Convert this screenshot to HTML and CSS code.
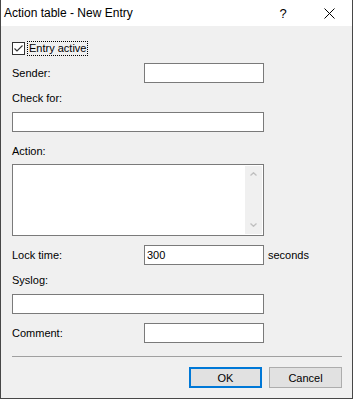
FILE: index.html
```html
<!DOCTYPE html>
<html lang="en">
<head>
  <meta charset="UTF-8">
  <title>Action table - New Entry</title>
  <link rel="stylesheet" href="styles.css">
</head>
<body>
  <div class="window">
    <!-- Title bar -->
    <div class="titlebar">
      <div class="title">Action table - New Entry</div>
      <div class="caption-btn help">?</div>
      <div class="caption-btn close">
        <svg width="11" height="11" viewBox="0 0 11 11"><path d="M0.5 0.5L10.5 10.5M10.5 0.5L0.5 10.5" stroke="#000" stroke-width="1" fill="none"/></svg>
      </div>
    </div>

    <div class="content">
      <!-- Entry active checkbox -->
      <div class="check-row">
        <span class="checkbox">
          <svg width="11" height="11" viewBox="0 0 11 11"><path d="M1.5 5.5L4 8L9.5 2.5" stroke="#333" stroke-width="1.1" fill="none"/></svg>
        </span>
        <span class="focus">Entry active</span>
      </div>

      <div class="field-row row-sender">
        <div class="label-col">Sender:</div>
        <input type="text" class="textbox short">
      </div>

      <div class="label label-check">Check for:</div>
      <input type="text" class="textbox long below-label">

      <div class="label label-action">Action:</div>
      <div class="textbox multi">
        <div class="scrollbar">
          <svg width="7" height="4" viewBox="0 0 7 4"><path d="M0.5 3.5L3.5 0.7L6.5 3.5" stroke="#c0c0c0" stroke-width="1.3" fill="none"/></svg>
          <svg width="7" height="4" viewBox="0 0 7 4"><path d="M0.5 0.5L3.5 3.3L6.5 0.5" stroke="#c0c0c0" stroke-width="1.3" fill="none"/></svg>
        </div>
      </div>

      <div class="field-row row-lock">
        <div class="label-col">Lock time:</div>
        <input type="text" class="textbox short" value="300">
        <span class="unit">seconds</span>
      </div>

      <div class="label label-syslog">Syslog:</div>
      <input type="text" class="textbox long below-label">

      <div class="field-row row-comment">
        <div class="label-col">Comment:</div>
        <input type="text" class="textbox short">
      </div>

      <div class="separator"></div>

      <!-- Dialog buttons -->
      <div class="buttons">
        <button class="btn ok">OK</button>
        <button class="btn">Cancel</button>
      </div>
    </div>
  </div>
</body>
</html>
```

FILE: styles.css
```css
/* Dialog window */
body {
  margin: 0;
  font-family: "Liberation Sans", Arial, sans-serif;
  font-size: 11px;
  color: #000;
}
.window {
  width: 353px;
  height: 399px;
  box-sizing: border-box;
  border: 1px solid #474747;
  border-top: none;
  background: #f0f0f0;
}
.titlebar {
  height: 26px;
  background: #fff;
  display: flex;
  align-items: center;
}
.title {
  flex: 1;
  padding-left: 3px;
  font-size: 12px;
}
.caption-btn {
  width: 46px;
  height: 26px;
  display: flex;
  align-items: center;
  justify-content: center;
}
.help {
  font-size: 13px;
}
.content {
  padding: 0 10px 0 11px;
}
/* Checkbox row */
.check-row {
  margin-top: 14px;
  height: 16px;
  display: flex;
  align-items: center;
}
.checkbox {
  width: 13px;
  height: 13px;
  box-sizing: border-box;
  border: 1px solid #333;
  background: #fff;
  margin-right: 2px;
  display: flex;
}
.focus {
  border: 1px dotted #000;
  padding: 0 1px;
  line-height: 13px;
}
/* Form fields */
.field-row {
  display: flex;
  align-items: center;
  height: 20px;
}
.label-col {
  width: 132px;
  line-height: 15px;
}
.label {
  line-height: 15px;
}
.textbox {
  display: block;
  box-sizing: border-box;
  height: 20px;
  margin: 0;
  border: 1px solid #7a7a7a;
  background: #fff;
  padding: 0 2px;
  font: inherit;
  color: #000;
  outline: none;
}
.short {
  width: 120px;
}
.long {
  width: 252px;
}
.below-label {
  margin-top: 6px;
}
.multi {
  width: 252px;
  height: 72px;
  margin-top: 5px;
  padding: 1px;
  display: flex;
  justify-content: flex-end;
}
.scrollbar {
  width: 17px;
  background: #f0f0f0;
  display: flex;
  flex-direction: column;
  justify-content: space-between;
  align-items: center;
  padding: 6px 0 7px;
  box-sizing: border-box;
}
.unit {
  margin-left: 4px;
}
.row-sender {
  margin-top: 7px;
}
.label-check {
  margin-top: 8px;
}
.label-action {
  margin-top: 12px;
}
.row-lock {
  margin-top: 9px;
}
.label-syslog {
  margin-top: 8px;
}
.row-comment {
  margin-top: 9px;
}
.separator {
  margin-top: 13px;
  border-top: 1px solid #a0a0a0;
}
/* Buttons */
.buttons {
  margin-top: 10px;
  display: flex;
  justify-content: flex-end;
  gap: 7px;
}
.btn {
  width: 73px;
  height: 21px;
  box-sizing: border-box;
  background: #e1e1e1;
  border: 1px solid #adadad;
  font: inherit;
  color: #000;
  padding: 0;
}
.ok {
  border: 2px solid #0078d7;
}
```
